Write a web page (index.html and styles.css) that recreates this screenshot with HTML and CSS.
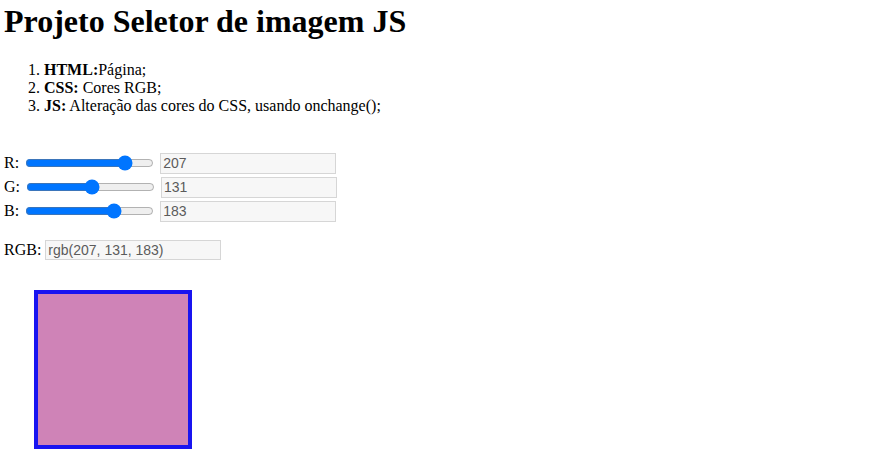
FILE: index.html
```html
<!DOCTYPE html>
<html lang="pt-BR">
<head>
<meta charset="utf-8">
<title>Projeto Seletor de imagem JS</title>
<link rel="stylesheet" href="styles.css">
</head>
<body>
<h1 class="title">Projeto Seletor de imagem JS</h1>
<ol class="notes">
  <li><b>HTML:</b>Página;</li>
  <li><b>CSS:</b> Cores RGB;</li>
  <li><b>JS:</b> Alteração das cores do CSS, usando onchange();</li>
</ol>
<div class="controls">
  <div class="row"><span class="lbl">R:</span> <input class="slider" type="range" min="0" max="255" value="207"> <input class="val" type="text" value="207" disabled></div>
  <div class="row"><span class="lbl">G:</span> <input class="slider" type="range" min="0" max="255" value="131"> <input class="val" type="text" value="131" disabled></div>
  <div class="row"><span class="lbl">B:</span> <input class="slider" type="range" min="0" max="255" value="183"> <input class="val" type="text" value="183" disabled></div>
</div>
<div class="rgb-row"><span class="lbl">RGB:</span> <input class="val val-rgb" type="text" value="rgb(207, 131, 183)" disabled></div>
<div class="preview"></div>
</body>
</html>
```
FILE: styles.css
```css
html, body {
  background: #ffffff;
}
body {
  margin: 0 4px;
  font-family: "Liberation Serif", "Times New Roman", serif;
  font-size: 16px;
  color: #000;
}
.title {
  font-size: 32px;
  font-weight: bold;
  margin: 3px 0 21px 0;
  line-height: 37px;
}
.notes {
  margin: 0 0 36px 0;
  padding-left: 40px;
  line-height: 18px;
}
.controls {
  display: flex;
  flex-direction: column;
}
.row {
  height: 24px;
  display: flex;
  align-items: center;
  gap: 4px;
}
.lbl {
  font-family: "Liberation Serif", serif;
}
.slider {
  width: 129px;
  margin: 2px;
}
.val {
  font-family: "Liberation Sans", Arial, sans-serif;
  font-size: 14px;
  width: 170px;
  height: 17px;
  line-height: 17px;
  padding: 1px 2px;
  border: 1px solid #d6d6d6;
  background: #f7f7f7;
  color: #5b5b5b;
  margin: 0;
}
.val-rgb {
  height: 16px;
  line-height: 16px;
}
.rgb-row {
  margin-top: 14px;
  height: 26px;
  display: flex;
  align-items: center;
  gap: 4px;
}
.preview {
  margin: 27px 0 0 30px;
  width: 150px;
  height: 151px;
  background: rgb(207, 131, 183);
  border: 4px solid #1914f0;
}
```
